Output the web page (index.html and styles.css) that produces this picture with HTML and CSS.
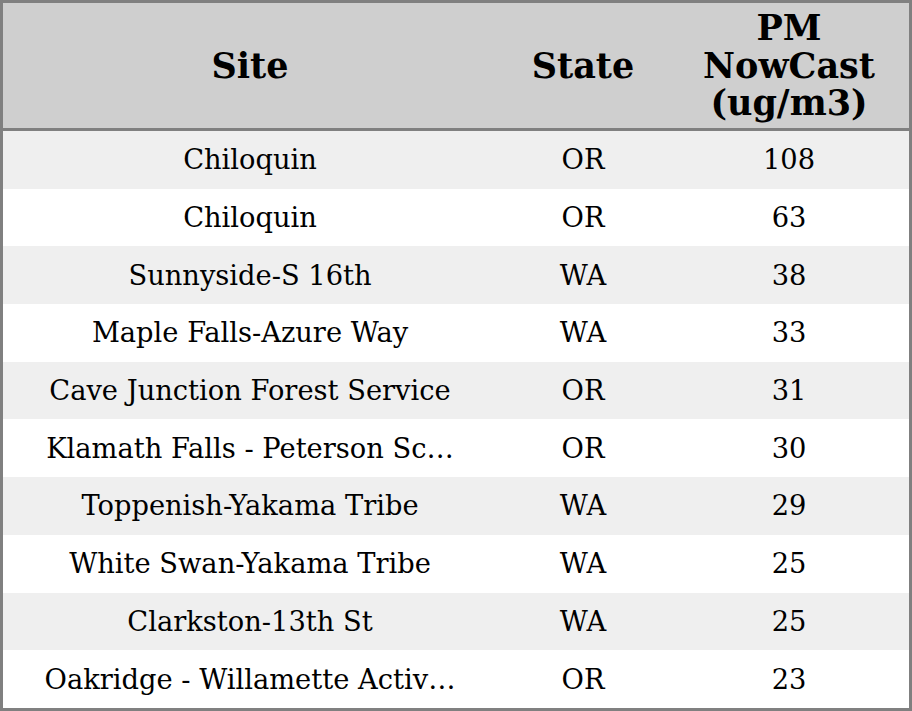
FILE: index.html
```html
<!DOCTYPE html>
<html>
<head>
<meta charset="utf-8">
<link rel="stylesheet" href="styles.css">
</head>
<body>
<table class="tbl">
  <colgroup>
    <col class="c-site">
    <col class="c-state">
    <col class="c-pm">
  </colgroup>
  <thead>
    <tr><th>Site</th><th>State</th><th>PM<br>NowCast<br>(ug/m3)</th></tr>
  </thead>
  <tbody>
    <tr><td>Chiloquin</td><td>OR</td><td>108</td></tr>
    <tr><td>Chiloquin</td><td>OR</td><td>63</td></tr>
    <tr><td>Sunnyside-S 16th</td><td>WA</td><td>38</td></tr>
    <tr><td>Maple Falls-Azure Way</td><td>WA</td><td>33</td></tr>
    <tr><td>Cave Junction Forest Service</td><td>OR</td><td>31</td></tr>
    <tr><td>Klamath Falls - Peterson Sc…</td><td>OR</td><td>30</td></tr>
    <tr><td>Toppenish-Yakama Tribe</td><td>WA</td><td>29</td></tr>
    <tr><td>White Swan-Yakama Tribe</td><td>WA</td><td>25</td></tr>
    <tr><td>Clarkston-13th St</td><td>WA</td><td>25</td></tr>
    <tr><td>Oakridge - Willamette Activ…</td><td>OR</td><td>23</td></tr>
  </tbody>
</table>
</body>
</html>
```
FILE: styles.css
```css
html, body {
  margin: 0;
  padding: 0;
  background: #ffffff;
}
.tbl {
  width: 912px;
  border-collapse: separate;
  border-spacing: 0;
  table-layout: fixed;
  border: 3px solid #808080;
  font-family: "DejaVu Serif", serif;
  color: #000;
}
.c-site { width: 494px; }
.c-state { width: 172px; }
.c-pm { width: 240px; }
.tbl th {
  background: #cfcfcf;
  font-size: 35px;
  font-weight: bold;
  line-height: 37.5px;
  height: 125px;
  padding: 0;
  text-align: center;
  vertical-align: middle;
  border-bottom: 3px solid #808080;
}
.tbl td {
  font-size: 27.3px;
  height: 57.7px;
  padding: 0;
  text-align: center;
  vertical-align: middle;
  white-space: nowrap;
  overflow: hidden;
}
.tbl tbody tr:nth-child(odd) td {
  background: #efefef;
}
```
